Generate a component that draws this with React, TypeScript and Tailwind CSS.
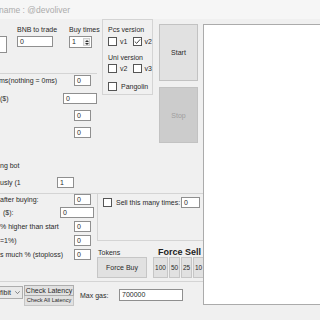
import React from "react";

const tbBase =
  "bg-white border border-[#8f8f8f] text-[7px] leading-[9px] pl-[2px] text-[#2a2a2a] overflow-hidden whitespace-nowrap shrink-0";

function Box({ className, children }: { className: string; children?: React.ReactNode }) {
  return <div className={`${tbBase} ${className}`}>{children}</div>;
}

function Check({ checked }: { checked?: boolean }) {
  return (
    <div className="w-[9px] h-[9px] bg-white border border-[#555] shrink-0 flex items-center justify-center">
      {checked && (
        <svg width="7" height="7" viewBox="0 0 7 7">
          <path d="M0.8 3.6 L2.7 5.4 L6.2 1.3" fill="none" stroke="#333" strokeWidth="0.9" />
        </svg>
      )}
    </div>
  );
}

export default function App() {
  return (
    <div className="w-[320px] h-[320px] overflow-hidden bg-[#f0f0f0] text-[#2a2a2a] text-[7px] leading-[9px] font-['Liberation_Sans',Arial,sans-serif] flex flex-col">
      <div className="h-[19px] shrink-0 bg-[#f6f6f6] flex items-center">
        <span className="-ml-[1px] text-[8.5px] leading-[10px] text-[#ababab] whitespace-nowrap">
          name : @devoliver
        </span>
      </div>
      <div className="flex h-[301px]">
        <div className="w-[203px] shrink-0 flex flex-col overflow-hidden">
          {/* upper */}
          <div className="flex h-[174px] shrink-0">
            <div className="w-[97px] shrink-0 flex flex-col">
              <div className="h-[54px] shrink-0 flex pt-[6px]">
                <div className="w-[7px] flex flex-col shrink-0">
                  <div className="h-[9px]" />
                  <div className="mt-[2px] h-[17px] w-[7px] bg-white border border-[#8f8f8f] border-l-0" />
                </div>
                <div className="ml-[10px] w-[36px] flex flex-col shrink-0">
                  <div className="h-[9px] whitespace-nowrap">BNB to trade</div>
                  <Box className="mt-[2px] h-[11px] w-[36px]">0</Box>
                </div>
                <div className="ml-[16px] flex flex-col shrink-0">
                  <div className="h-[9px] whitespace-nowrap">Buy times</div>
                  <div className="mt-[2px] w-[23px] h-[12px] bg-white border border-[#8f8f8f] flex">
                    <span className="flex-1 pl-[2px] leading-[10px]">1</span>
                    <div className="w-[7px] my-[1px] mr-[1px] flex flex-col items-center justify-center gap-[1px] bg-[#ececec] border border-[#cfcfcf]">
                      <svg width="4" height="2" viewBox="0 0 4 2">
                        <path d="M0 2 L2 0 L4 2 Z" fill="#333" />
                      </svg>
                      <svg width="4" height="2" viewBox="0 0 4 2">
                        <path d="M0 0 L4 0 L2 2 Z" fill="#333" />
                      </svg>
                    </div>
                  </div>
                </div>
              </div>
              <div className="h-[120px] shrink-0 border-t border-[#d4d4d4] flex flex-col">
                <div className="mt-[1px] h-[11px] flex items-center">
                  <span className="flex-1 -ml-[1px] whitespace-nowrap">ms(nothing = 0ms)</span>
                  <Box className="w-[17px] h-[11px]">0</Box>
                  <div className="w-[6px]" />
                </div>
                <div className="mt-[7px] h-[11px] flex items-center">
                  <span className="flex-1 whitespace-nowrap">($)</span>
                  <Box className="w-[34px] h-[11px]">0</Box>
                </div>
                <div className="mt-[6px] h-[11px] flex items-center justify-end">
                  <Box className="w-[17px] h-[11px]">0</Box>
                  <div className="w-[6px]" />
                </div>
                <div className="mt-[6px] h-[11px] flex items-center justify-end">
                  <Box className="w-[17px] h-[11px]">0</Box>
                  <div className="w-[6px]" />
                </div>
                <div className="mt-[23px] h-[9px] whitespace-nowrap">ng bot</div>
                <div className="mt-[7px] h-[11px] flex items-center">
                  <span className="w-[57px] whitespace-nowrap">usly (1</span>
                  <Box className="w-[17px] h-[11px]">1</Box>
                </div>
              </div>
            </div>
            <div className="ml-[5px] w-[51px] h-[76px] shrink-0 border border-[#d4d4d4] pl-[5px] pt-[5px] flex flex-col">
              <div className="h-[9px] whitespace-nowrap">Pcs version</div>
              <div className="mt-[3px] flex items-center h-[9px]">
                <div className="w-[25px] flex items-center">
                  <Check />
                  <span className="ml-[3px]">v1</span>
                </div>
                <div className="flex items-center">
                  <Check checked />
                  <span className="ml-[3px]">v2</span>
                </div>
              </div>
              <div className="mt-[7px] h-[9px] whitespace-nowrap">Uni version</div>
              <div className="mt-[2px] flex items-center h-[9px]">
                <div className="w-[25px] flex items-center">
                  <Check />
                  <span className="ml-[3px]">v2</span>
                </div>
                <div className="flex items-center">
                  <Check />
                  <span className="ml-[3px]">v3</span>
                </div>
              </div>
              <div className="mt-[9px] flex items-center h-[9px]">
                <Check />
                <span className="ml-[4px]">Pangolin</span>
              </div>
            </div>
            <div className="ml-[6px] w-[39px] shrink-0 flex flex-col">
              <div className="mt-[5px] h-[57px] bg-[#e1e1e1] border border-[#c2c2c2] flex items-center justify-center">
                Start
              </div>
              <div className="mt-[6px] h-[56px] bg-[#cccccc] border border-[#c2c2c2] text-[#9e9e9e] flex items-center justify-center">
                Stop
              </div>
            </div>
          </div>
          {/* lower */}
          <div className="h-[88px] shrink-0 border-t border-[#d4d4d4] flex">
            <div className="w-[97px] shrink-0 flex flex-col">
              <div className="h-[11px] flex items-center">
                <span className="flex-1 whitespace-nowrap">after buying:</span>
                <Box className="w-[17px] h-[11px]">0</Box>
                <div className="w-[6px]" />
              </div>
              <div className="mt-[2px] h-[11px] flex items-center">
                <span className="flex-1 pl-[3px] whitespace-nowrap">($):</span>
                <Box className="w-[34px] h-[11px]">0</Box>
                <div className="w-[3px]" />
              </div>
              <div className="mt-[3px] h-[11px] flex items-center">
                <span className="flex-1 whitespace-nowrap">% higher than start</span>
                <Box className="w-[17px] h-[11px]">0</Box>
                <div className="w-[6px]" />
              </div>
              <div className="mt-[3px] h-[11px] flex items-center">
                <span className="flex-1 whitespace-nowrap">=1%)</span>
                <Box className="w-[17px] h-[11px]">0</Box>
                <div className="w-[6px]" />
              </div>
              <div className="mt-[3px] h-[11px] flex items-center">
                <span className="flex-1 whitespace-nowrap">s much % (stoploss)</span>
                <Box className="w-[17px] h-[11px]">0</Box>
                <div className="w-[6px]" />
              </div>
            </div>
            <div className="flex-1 flex flex-col">
              <div className="h-[46px] shrink-0 border-l border-[#d4d4d4] flex items-start">
                <div className="mt-[3px] h-[11px] flex items-center pl-[5px] w-full">
                  <Check />
                  <span className="ml-[4px] whitespace-nowrap">Sell this many times:</span>
                  <Box className="ml-auto w-[19px] h-[11px]">0</Box>
                  <div className="w-[4px] shrink-0" />
                </div>
              </div>
              <div className="h-[41px] shrink-0 border-t border-[#d4d4d4] flex">
                <div className="w-[50px] shrink-0 flex flex-col">
                  <div className="mt-[7px] h-[9px] pl-[1px]">Tokens</div>
                  <div className="h-[21px] w-[50px] bg-[#e1e1e1] border border-[#c6c6c6] flex items-center justify-center whitespace-nowrap">
                    Force Buy
                  </div>
                </div>
                <div className="ml-[6px] flex flex-col">
                  <div className="mt-[7px] h-[9px] pl-[5px] font-bold text-[9px] leading-[9px] text-[#222] whitespace-nowrap">
                    Force Sell
                  </div>
                  <div className="flex gap-[1px]">
                    <div className="h-[21px] w-[15px] shrink-0 bg-[#e1e1e1] border border-[#c6c6c6] flex items-center justify-center text-[6.5px]">
                      100
                    </div>
                    <div className="h-[21px] w-[11px] shrink-0 bg-[#e1e1e1] border border-[#c6c6c6] flex items-center justify-center text-[6.5px]">
                      50
                    </div>
                    <div className="h-[21px] w-[11px] shrink-0 bg-[#e1e1e1] border border-[#c6c6c6] flex items-center justify-center text-[6.5px]">
                      25
                    </div>
                    <div className="h-[21px] w-[11px] shrink-0 bg-[#e1e1e1] border border-[#c6c6c6] flex items-center justify-center text-[6.5px]">
                      10
                    </div>
                  </div>
                </div>
              </div>
            </div>
          </div>
          {/* bottom */}
          <div className="flex-1 border-t border-[#d4d4d4] flex items-start">
            <div className="mt-[4px] w-[23px] h-[13px] shrink-0 border border-[#adadad] border-l-0 bg-[#e9e9e9] flex items-center">
              <span className="whitespace-nowrap">fibit</span>
              <svg className="ml-[4px]" width="5" height="3" viewBox="0 0 5 3">
                <path d="M0.3 0.3 L2.5 2.6 L4.7 0.3" fill="none" stroke="#555" strokeWidth="0.7" />
              </svg>
            </div>
            <div className="ml-[1px] mt-[3px] w-[50px] shrink-0 flex flex-col">
              <div className="h-[11px] bg-[#e1e1e1] border border-[#adadad] flex items-center justify-center whitespace-nowrap">
                Check Latency
              </div>
              <div className="h-[10px] bg-[#e1e1e1] border border-[#c6c6c6] border-t-0 flex items-center justify-center whitespace-nowrap text-[5.6px]">
                Check All Latency
              </div>
            </div>
            <div className="ml-[6px] mt-[9px] w-[39px] shrink-0 h-[9px] whitespace-nowrap">Max gas:</div>
            <Box className="mt-[7px] w-[64px] h-[12px] leading-[10px]">700000</Box>
          </div>
        </div>
        <div className="flex-1 mt-[5px] h-[281px] bg-white border border-[#ababab] border-r-0" />
      </div>
    </div>
  );
}
